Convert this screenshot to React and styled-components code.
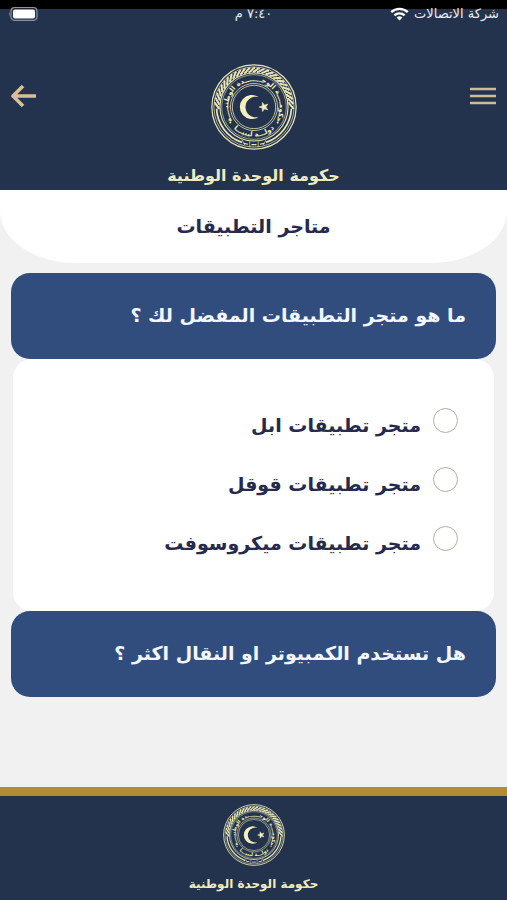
import React, { useId, useState } from "react";
import styled, { createGlobalStyle } from "styled-components";

const questions = [
  {
    id: "store",
    title: "ما هو متجر التطبيقات المفضل لك ؟",
    options: ["متجر تطبيقات ابل", "متجر تطبيقات قوقل", "متجر تطبيقات ميكروسوفت"],
  },
  {
    id: "device",
    title: "هل تستخدم الكمبيوتر او النقال اكثر ؟",
    options: [],
  },
];

// rope border, only on the upper part of the seal
const ropeAngles = Array.from({ length: 26 }, (_, i) => -88 + i * (176 / 25));

const Emblem = ({ size }) => {
  const id = useId();
  return (
    <Seal $size={size} viewBox="0 0 100 100" aria-hidden="true">
      <defs>
        <path id={id + "top"} d="M24 65 A30 30 0 1 1 76 65" />
        <path id={id + "bottom"} d="M21 69 A35 35 0 0 0 79 69" />
      </defs>
      <g fill="none" stroke="#e9e5b4">
        <circle cx="50" cy="50" r="49" strokeWidth="1.4" />
        <circle cx="50" cy="50" r="46.6" strokeWidth="0.8" />
        <circle cx="50" cy="50" r="39.6" strokeWidth="1.3" />
        <circle cx="50" cy="50" r="37.6" strokeWidth="0.7" />
        <circle cx="50" cy="50" r="27.4" strokeWidth="0.9" />
        <circle cx="50" cy="50" r="25.2" strokeWidth="0.9" />
        <path d="M6.5 52 A43.5 43.5 0 0 0 36 91.2 M93.5 52 A43.5 43.5 0 0 1 64 91.2" strokeWidth="2" />
        <path d="M38 92.3 l5 1 M47 93.8 h6 M57 93.3 l5 -1" strokeWidth="1.4" />
        <path d="M36 88 l3 6 M64 88 l-3 6 M45 90 v7 M55 90 v7" strokeWidth="0.8" />
        {ropeAngles.map((a) => (
          <path
            key={a}
            d="M46 9.2 C50 9.2 50 4.6 54 4.6"
            strokeWidth="2.4"
            transform={`rotate(${a} 50 50)`}
          />
        ))}
      </g>
      <g fill="#f3efbe">
        <path d="M55.5 38.5 A14 14 0 1 0 55.5 61.5 A12 12 0 1 1 55.5 38.5 Z" />
        <path
          d="M56 50 L59.7 48.7 L59.8 44.8 L62.2 47.9 L65.9 46.8 L63.7 50 L65.9 53.2 L62.2 52.1 L59.8 55.2 L59.7 51.3 Z"
          stroke="#f3efbe"
          strokeWidth="0.8"
        />
        <circle cx="22.5" cy="68" r="1.1" />
        <circle cx="77.5" cy="68" r="1.1" />
        <SealText>
          <textPath href={"#" + id + "top"} startOffset="50%">
            حكومــــة الوحـــــــدة الوطنيــــة
          </textPath>
        </SealText>
        <SealText>
          <textPath href={"#" + id + "bottom"} startOffset="50%">
            دولـــة ليبيـــا
          </textPath>
        </SealText>
      </g>
    </Seal>
  );
};

const Question = ({ question }) => {
  const [answer, setAnswer] = useState(null);
  return (
    <section aria-labelledby={question.id}>
      <QuestionTitle id={question.id}>{question.title}</QuestionTitle>
      {question.options.length > 0 && (
        <Options role="radiogroup" aria-labelledby={question.id}>
          {question.options.map((option) => (
            <Option key={option}>
              <Radio
                type="radio"
                name={question.id}
                checked={answer === option}
                onChange={() => setAnswer(option)}
              />
              <span>{option}</span>
            </Option>
          ))}
        </Options>
      )}
    </section>
  );
};

const App = () => {
  return (
    <Page dir="rtl">
      <GlobalStyle />
      <Header>
        <StatusBar>
          <Carrier>
            <span>شركة الاتصالات</span>
            <svg width="19" height="14" viewBox="0 0 19 14" aria-hidden="true">
              <g fill="none" stroke="#fff" strokeWidth="2.4">
                <path d="M1.2 5.2 A12 12 0 0 1 17.8 5.2" />
                <path d="M4.4 8.4 A7.4 7.4 0 0 1 14.6 8.4" />
              </g>
              <path d="M9.5 13.6 L6.5 10.6 A4.4 4.4 0 0 1 12.5 10.6 Z" fill="#fff" />
            </svg>
          </Carrier>
          <span>٧:٤٠ م</span>
          <Battery>
            <svg width="30" height="14" viewBox="0 0 30 14" aria-hidden="true">
              <rect x="3" y="0.7" width="26" height="12.6" rx="3.5" fill="none" stroke="#8b93a1" strokeWidth="1.2" />
              <rect x="5" y="2.4" width="22" height="9.2" rx="2" fill="#fff" />
              <path d="M1.6 4.6 Q0 7 1.6 9.4 Z" fill="#8b93a1" />
            </svg>
          </Battery>
        </StatusBar>
        <NavBar>
          <IconButton type="button" aria-label="القائمة">
            <svg width="26" height="18" viewBox="0 0 26 18">
              <path d="M0 2 H26 M0 9 H26 M0 16 H26" stroke="#cfbd98" strokeWidth="2.4" />
            </svg>
          </IconButton>
          <Emblem size={86} />
          <IconButton type="button" aria-label="رجوع">
            <svg width="26" height="24" viewBox="0 0 26 24">
              <path
                d="M12 2 L2 12 L12 22 M2 12 H25"
                fill="none"
                stroke="#d8bf98"
                strokeWidth="3.6"
                strokeLinejoin="round"
              />
            </svg>
          </IconButton>
        </NavBar>
        <Government $size={16}>حكومة الوحدة الوطنية</Government>
      </Header>
      <TitlePanel>
        <Title>متاجر التطبيقات</Title>
      </TitlePanel>
      <Content>
        {questions.map((question) => (
          <Question key={question.id} question={question} />
        ))}
      </Content>
      <Footer>
        <Emblem size={62} />
        <Government $size={12}>حكومة الوحدة الوطنية</Government>
      </Footer>
    </Page>
  );
};

export default App;

const GlobalStyle = createGlobalStyle`
  * {
    box-sizing: border-box;
  }

  body {
    margin: 0;
    background-color: #f1f1f1;
    font-family: "DejaVu Sans", sans-serif;
  }
`;

const Page = styled.div`
  display: flex;
  flex-direction: column;
  min-height: 100vh;
`;

const Header = styled.header`
  display: flex;
  flex-direction: column;
  background: linear-gradient(#000 9px, #23334e 9px);
  padding-bottom: 1px;
`;

const StatusBar = styled.div`
  display: grid;
  grid-template-columns: 1fr auto 1fr;
  align-items: center;
  height: 28px;
  padding: 0 8px;
  color: #e8ebf0;
  font-size: 13px;
  line-height: 28px;
`;

const Carrier = styled.div`
  display: flex;
  align-items: center;
  gap: 5px;
`;

const Battery = styled.div`
  display: flex;
  justify-content: flex-end;
`;

const NavBar = styled.div`
  display: flex;
  align-items: center;
  justify-content: space-between;
  padding: 36px 11px 13px;
`;

const IconButton = styled.button`
  display: flex;
  padding: 0;
  margin-bottom: 22px;
  border: none;
  background: none;
  cursor: pointer;
`;

const Seal = styled.svg`
  display: block;
  flex: none;
  width: ${(props) => props.$size}px;
  height: ${(props) => props.$size}px;
`;

const SealText = styled.text`
  direction: rtl;
  text-anchor: middle;
  font-size: 8px;
  font-weight: bold;
`;

const Government = styled.p`
  margin: 0;
  color: #f0ecc0;
  font-size: ${(props) => props.$size}px;
  font-weight: bold;
  line-height: 26px;
  text-align: center;
`;

const TitlePanel = styled.div`
  padding: 18px 16px 19px;
  border-radius: 0 0 76px 76px / 0 0 52px 52px;
  background-color: #fff;
`;

const Title = styled.h1`
  margin: 0;
  color: #262a4c;
  font-size: 19px;
  line-height: 36px;
  text-align: center;
`;

const Content = styled.main`
  flex: 1;
  padding: 10px 11px 40px;
`;

const QuestionTitle = styled.h2`
  margin: 0;
  padding: 24px 30px 26px;
  border-radius: 19px;
  background-color: #304d7e;
  color: #f3f6fc;
  font-size: 19px;
  line-height: 36px;
`;

const Options = styled.div`
  display: flex;
  flex-direction: column;
  gap: 20px;
  margin: 0 2px;
  padding: 48px 36px 47px;
  border-radius: 19px;
  background-color: #fff;
`;

const Option = styled.label`
  display: flex;
  align-items: flex-start;
  gap: 12px;
  padding-bottom: 3px;
  color: #262a4c;
  font-size: 19px;
  font-weight: bold;
  line-height: 36px;
  cursor: pointer;
`;

const Radio = styled.input`
  appearance: none;
  flex: none;
  width: 25px;
  height: 25px;
  margin: 1px 0 0;
  border: 1px solid #b5b09c;
  border-radius: 50%;
  background-color: #fff;

  &:checked {
    background-color: #304d7e;
    box-shadow: inset 0 0 0 4px #fff;
  }
`;

const Footer = styled.footer`
  display: flex;
  flex-direction: column;
  align-items: center;
  gap: 5px;
  padding: 8px 0 3px;
  border-top: 9px solid #b58a39;
  background-color: #23334e;
`;
